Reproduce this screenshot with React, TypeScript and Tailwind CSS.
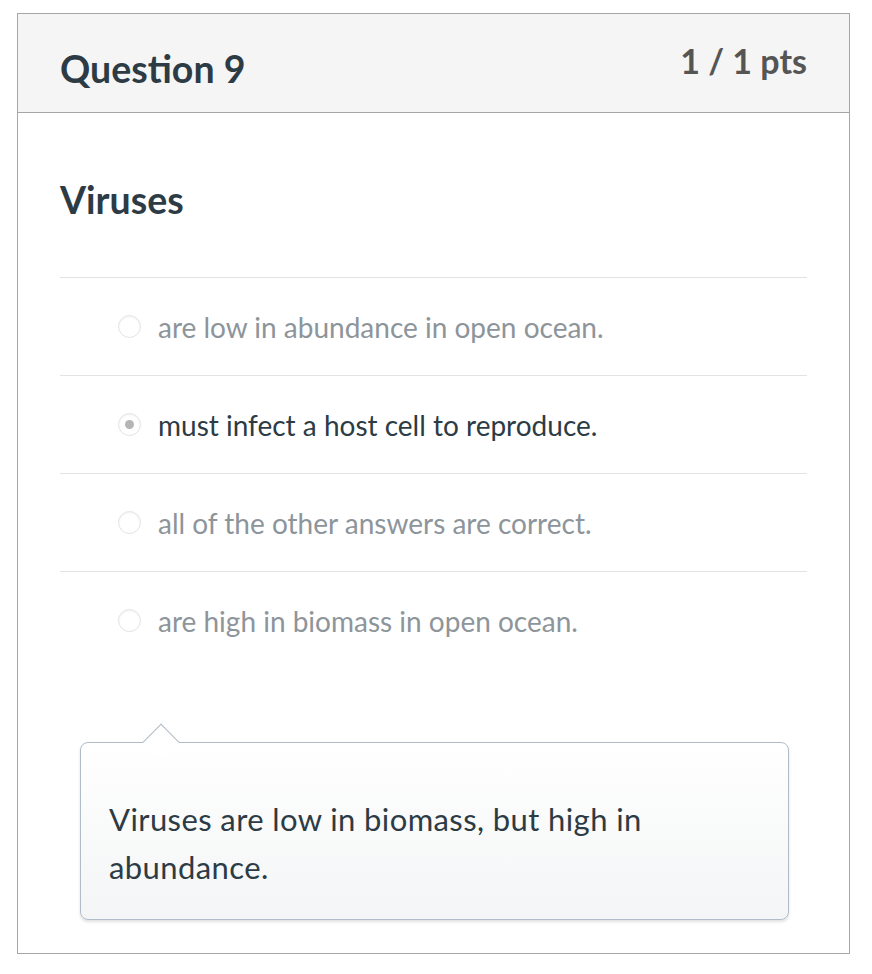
const answers = [
  { text: "are low in abundance in open ocean.", selected: false },
  { text: "must infect a host cell to reproduce.", selected: true },
  { text: "all of the other answers are correct.", selected: false },
  { text: "are high in biomass in open ocean.", selected: false },
]

function Radio({ checked }: { checked: boolean }) {
  return (
    <span className="flex h-[23px] w-[23px] shrink-0 items-center justify-center rounded-full border border-[#e3e3e3] bg-white shadow-[inset_0_1px_2px_rgba(0,0,0,0.06)]">
      {checked && <span className="h-[9px] w-[9px] rounded-full bg-[#b5b5b5]" />}
    </span>
  )
}

export default function App() {
  return (
    <div className="min-h-[974px] bg-white pl-[17px] pt-[13px] font-['Lato','Open_Sans',sans-serif]">
      <div className="flex h-[941px] w-[833px] flex-col border border-[#a6a6a6]">
        <div className="flex h-[99px] items-start justify-between border-b border-[#a6a6a6] bg-[#f5f5f5] px-[42px]">
          <h2 className="mt-[31px] text-[37.5px] font-bold leading-[48px] text-[#2d3b45]">Question 9</h2>
          <div className="mt-[23px] text-[34px] font-bold leading-[48px] text-[#555555]">1 / 1 pts</div>
        </div>

        <div className="px-[42px] pt-[63px]">
          <h3 className="text-[37.5px] font-bold leading-[48px] text-[#2d3b45]">Viruses</h3>

          <ul className="mt-[53px]">
            {answers.map((a) => (
              <li key={a.text} className="flex h-[98px] items-center gap-[17px] border-t border-[#e3e3e3] pl-[58px]">
                <Radio checked={a.selected} />
                <span className={`text-[28px] leading-[36px] ${a.selected ? "text-[#2d3b45]" : "text-[#8d959b]"}`}>
                  {a.text}
                </span>
              </li>
            ))}
          </ul>

          <div className="relative ml-[20px] mt-[73px] w-[709px]">
            <div className="absolute left-[68px] top-[-13px] h-[26px] w-[26px] rotate-45 border-l border-t border-[#b0bcc7] bg-white" />
            <div className="h-[178px] rounded-[8px] border border-[#b0bcc7] bg-gradient-to-b from-white to-[#f4f5f6] px-[28px] pt-[52px] shadow-[0_2px_3px_rgba(0,0,0,0.12)]">
              <p className="relative text-[31px] leading-[48px] tracking-[0.4px] text-[#2d3b45]">
                Viruses are low in biomass, but high in abundance.
              </p>
            </div>
          </div>
        </div>
      </div>
    </div>
  )
}
